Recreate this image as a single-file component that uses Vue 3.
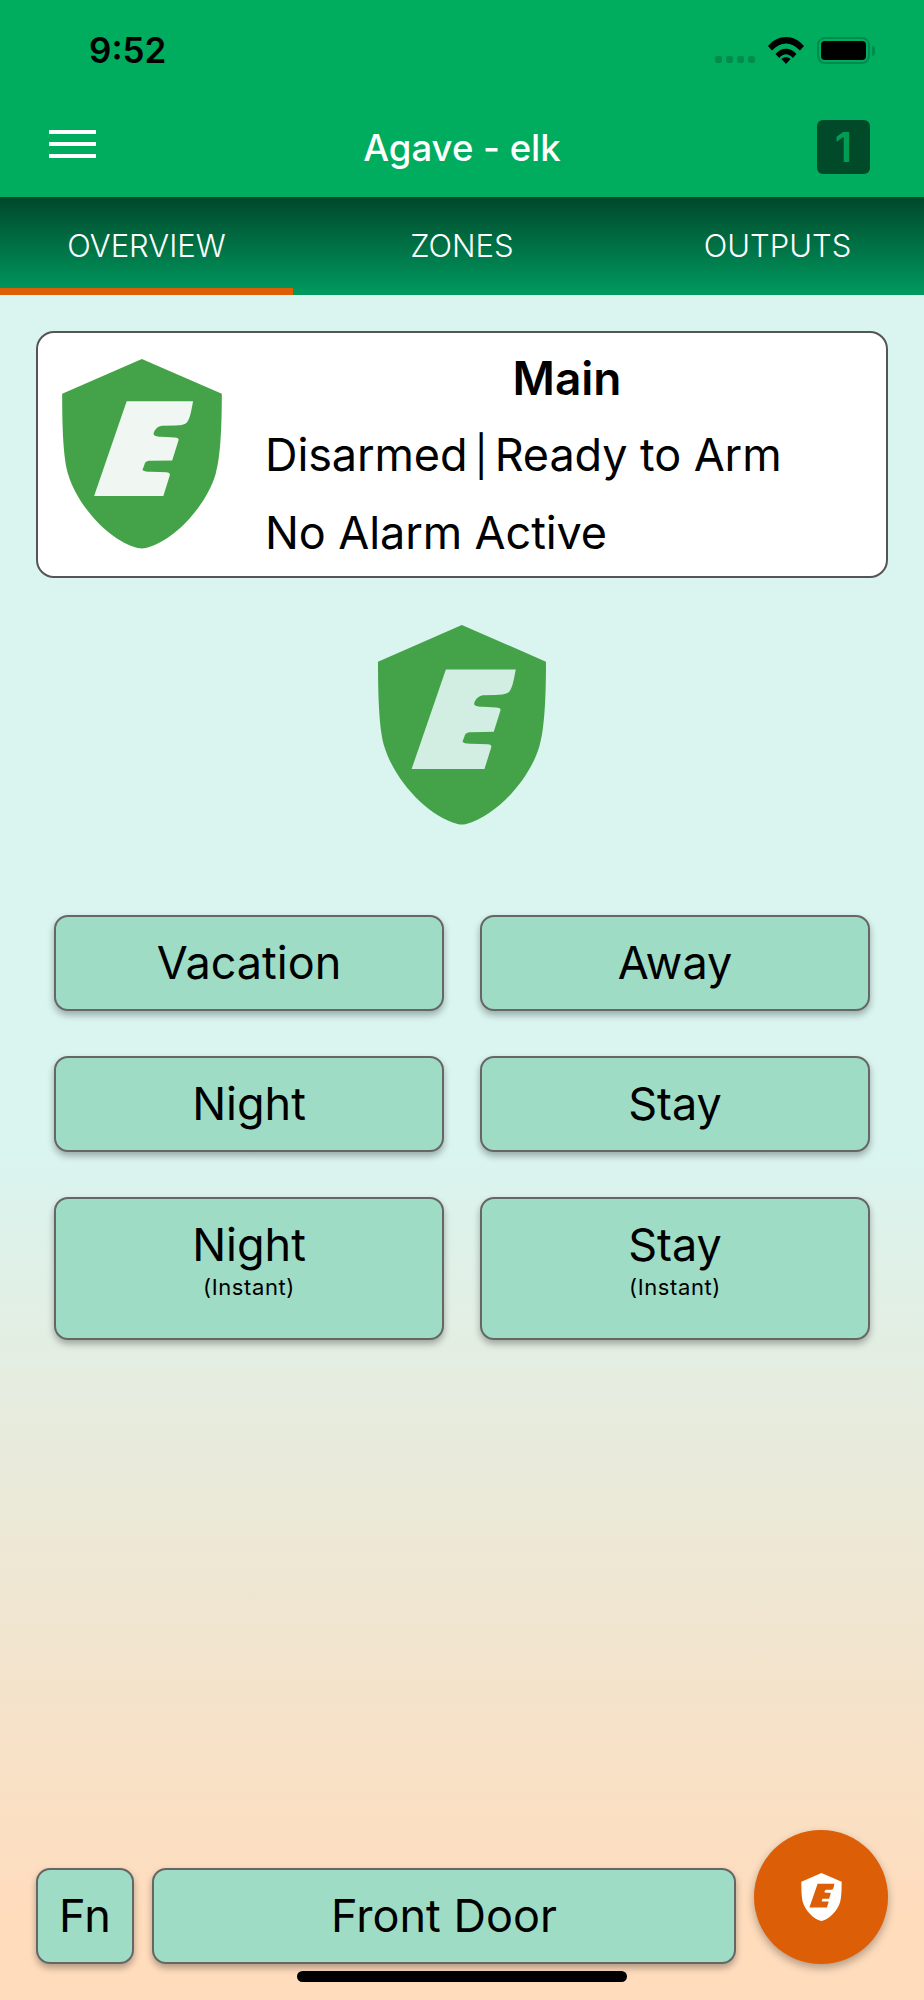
<script setup>
const shield = 'M337 45 L590 155 C590 270 585 360 570 410 C540 510 440 620 350 643 Q337 646 324 643 C234 620 134 510 104 410 C89 360 85 270 85 155 Z'
const letter = 'M289 179 L499 179 C495 200 490 235 480 245 C472 254 455 255 440 255 L400 256 C385 258 375 272 374 282 C376 290 390 290 400 291 L440 293 C450 294 455 296 453 302 L433 366 L365 367 C350 367 347 372 345 380 L339 395 C342 400 350 401 365 402 L415 403 C425 404 427 408 425 414 L405 478 L186 478 Z'
const tabs = ['OVERVIEW', 'ZONES', 'OUTPUTS']
const modes = [
  { label: 'Vacation' },
  { label: 'Away' },
  { label: 'Night' },
  { label: 'Stay' },
  { label: 'Night', sub: '(Instant)' },
  { label: 'Stay', sub: '(Instant)' },
]
</script>

<template>
  <div class="screen">
    <header class="appbar">
      <div class="status">
        <span class="clock">9:52</span>
        <div class="status-icons">
          <div class="signal"><i></i><i></i><i></i><i></i></div>
          <svg class="wifi" viewBox="0 0 36 27">
            <path d="M0 9 C10 -3 26 -3 36 9 L32 13.5 C23 4 13 4 4 13.5 Z" />
            <path d="M7.5 17 C13.5 10 22.5 10 28.5 17 L24.8 21 C20.5 16 15.5 16 11.2 21 Z" />
            <path d="M13.5 22 C16 19.6 20 19.6 22.5 22 L18 27 Z" />
          </svg>
          <div class="battery"><span></span></div>
          <div class="nub"></div>
        </div>
      </div>
      <div class="titlebar">
        <div class="burger"><i></i><i></i><i></i></div>
        <div class="title">Agave - elk</div>
        <div class="badge">1</div>
      </div>
    </header>

    <nav class="tabs">
      <div v-for="(t, i) in tabs" :key="t" class="tab" :class="{ active: i === 0 }">{{ t }}</div>
    </nav>

    <main class="content">
      <section class="card">
        <svg class="card-shield" viewBox="85 45 505 601">
          <path :d="shield" fill="#44a349" />
          <path :d="letter" fill="#f0f7f2" />
        </svg>
        <div class="card-text">
          <div class="card-name">Main</div>
          <div class="card-line">Disarmed<span class="sep">|</span>Ready to Arm</div>
          <div class="card-line">No Alarm Active</div>
        </div>
      </section>

      <svg class="hero-shield" viewBox="85 45 505 601">
        <path :d="shield" fill="#44a349" />
        <path :d="letter" fill="#d2eee3" />
      </svg>

      <div class="modes">
        <button v-for="(m, i) in modes" :key="i" class="btn" :class="{ tall: m.sub }">
          <span class="btn-label">{{ m.label }}</span>
          <span v-if="m.sub" class="btn-sub">{{ m.sub }}</span>
        </button>
      </div>

      <div class="footer-row">
        <button class="btn fn"><span class="btn-label">Fn</span></button>
        <button class="btn door"><span class="btn-label">Front Door</span></button>
      </div>
    </main>

    <button class="fab">
      <svg class="fab-shield" viewBox="85 45 505 601">
        <path :d="shield" fill="#ffffff" />
        <path :d="letter" fill="#dc5e07" />
      </svg>
    </button>
    <div class="home-bar"></div>
  </div>
</template>

<style>
html, body { margin: 0; padding: 0; }
</style>

<style scoped>
.screen {
  position: relative;
  width: 924px;
  height: 2000px;
  overflow: hidden;
  display: flex;
  flex-direction: column;
  font-family: Inter, "Liberation Sans", sans-serif;
  color: #000;
  background: #daf4ef;
}
.appbar {
  height: 197px;
  background: #00ac5e;
  display: flex;
  flex-direction: column;
  flex: none;
}
.status {
  height: 100px;
  display: flex;
  justify-content: space-between;
  padding: 37px 49px 0 89px;
  box-sizing: border-box;
}
.clock {
  font-size: 35px;
  font-weight: 600;
  line-height: 27px;
  height: 27px;
}
.status-icons {
  display: flex;
  align-items: flex-start;
}
.signal {
  display: flex;
  gap: 4px;
  margin-top: 19px;
  margin-right: 13px;
}
.signal i {
  width: 7px;
  height: 7px;
  border-radius: 2px;
  background: #008c4d;
}
.wifi {
  width: 36px;
  height: 27px;
  fill: #000;
  margin-right: 13px;
}
.battery {
  width: 53px;
  height: 27px;
  box-sizing: border-box;
  border: 2px solid #008c4d;
  border-radius: 8px;
  padding: 2px;
}
.battery span {
  display: block;
  height: 100%;
  background: #000;
  border-radius: 4px;
}
.nub {
  width: 3px;
  height: 10px;
  margin: 9px 0 0 2px;
  background: #008c4d;
  border-radius: 0 3px 3px 0;
}
.titlebar {
  height: 97px;
  position: relative;
  display: flex;
  align-items: center;
  justify-content: space-between;
  padding: 0 54px 0 49px;
}
.burger {
  width: 47px;
  display: flex;
  flex-direction: column;
  gap: 8px;
  margin-top: -9px;
}
.burger i {
  height: 4px;
  background: #fff;
}
.title {
  position: absolute;
  left: 0;
  right: 0;
  top: 26px;
  text-align: center;
  color: #fff;
  font-size: 36.5px;
  font-weight: 500;
  line-height: 44px;
}
.badge {
  width: 53px;
  height: 54px;
  margin-top: -3px;
  border-radius: 6px;
  background: #004a2a;
  color: #009c55;
  font-size: 41px;
  font-weight: 600;
  line-height: 54px;
  text-align: center;
}
.tabs {
  height: 98px;
  flex: none;
  display: flex;
  background: linear-gradient(#00482b, #009a5f);
  color: #fff;
}
.tab {
  flex: 1;
  box-sizing: border-box;
  height: 98px;
  padding-top: 31px;
  text-align: center;
  font-size: 31px;
  font-weight: 300;
  line-height: 36px;
}
.tab:nth-child(1) { flex: 0 0 293px; }
.tab:nth-child(2) { flex: 0 0 338px; }
.tab:nth-child(3) { flex: 0 0 293px; }
.tab.active { border-bottom: 7px solid #dc5e07; }
.content {
  flex: 1;
  display: flex;
  flex-direction: column;
  padding: 36px 36px 36px;
  background: linear-gradient(#daf4ef 0, #daf4ef 50.5%, #ffdcbc 95.5%);
}
.card {
  height: 247px;
  box-sizing: border-box;
  border: 2px solid #555;
  border-radius: 18px;
  background: #fff;
  display: flex;
  align-items: flex-start;
  padding: 26px 20px 0 24px;
}
.card-shield {
  width: 160px;
  height: 190px;
  flex: none;
}
.card-text {
  flex: 1;
  margin: -18px 0 0 43px;
}
.card-name {
  font-size: 46px;
  font-weight: 600;
  line-height: 74px;
  margin-bottom: 2px;
  text-align: center;
  padding-left: 3px;
}
.card-line {
  font-size: 45px;
  line-height: 76px;
  letter-spacing: -0.1px;
  white-space: nowrap;
}
.sep {
  margin: 0 7px;
  font-size: 40px;
}
.hero-shield {
  width: 168px;
  height: 200px;
  align-self: center;
  margin-top: 47px;
  flex: none;
}
.modes {
  display: grid;
  grid-template-columns: 390px 390px;
  column-gap: 36px;
  row-gap: 45px;
  margin: 90px 18px 0;
}
.btn {
  height: 96px;
  box-sizing: border-box;
  border: 2px solid #666;
  border-radius: 14px;
  background: #9edcc5;
  box-shadow: 0 4px 7px rgba(0, 0, 0, 0.3);
  padding: 0;
  margin: 0;
  font: inherit;
  color: #000;
  display: flex;
  flex-direction: column;
  align-items: center;
  justify-content: flex-start;
}
.btn.tall {
  height: 143px;
}
.btn-label {
  font-size: 45px;
  line-height: 92px;
}
.btn-sub {
  font-size: 22px;
  line-height: 24px;
  letter-spacing: 0.6px;
  margin-top: -16px;
}
.footer-row {
  margin-top: auto;
  display: flex;
  gap: 18px;
}
.fn {
  width: 98px;
}
.door {
  width: 584px;
}
.fab {
  position: absolute;
  left: 754px;
  top: 1830px;
  width: 134px;
  height: 134px;
  border: 0;
  padding: 0;
  border-radius: 50%;
  background: #dc5e07;
  box-shadow: 0 4px 8px rgba(0, 0, 0, 0.3);
  display: flex;
  align-items: center;
  justify-content: center;
}
.fab-shield {
  width: 41px;
  height: 48px;
}
.home-bar {
  position: absolute;
  left: 297px;
  top: 1971px;
  width: 330px;
  height: 11px;
  border-radius: 6px;
  background: #000;
}
</style>
